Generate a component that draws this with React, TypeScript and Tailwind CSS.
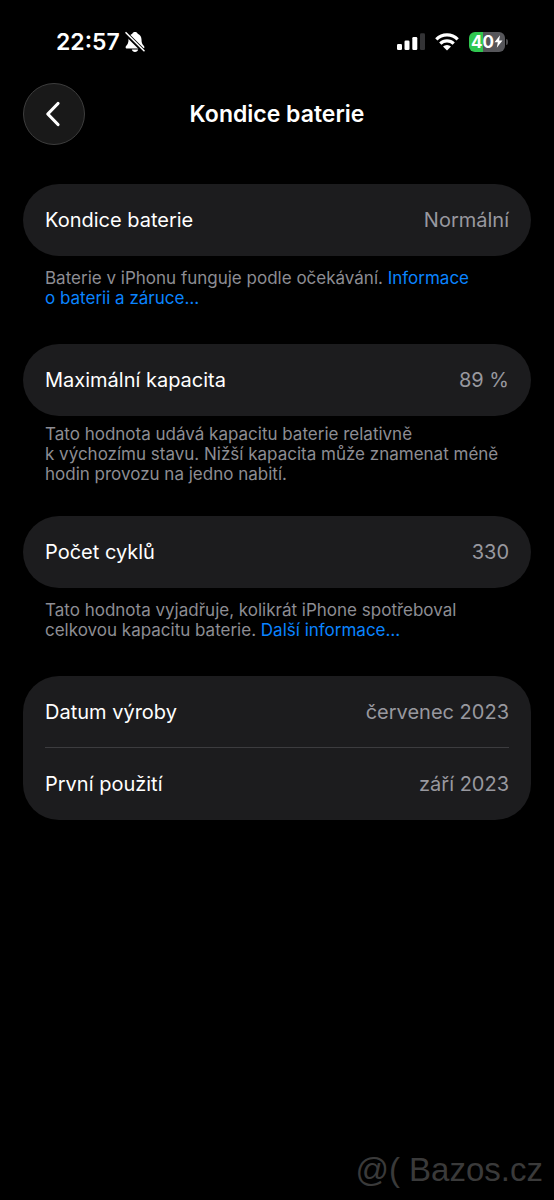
import React from 'react';

interface RowData {
  label: string;
  value: string;
}

interface GroupData {
  rows: RowData[];
  note?: React.ReactNode;
  noteClass?: string;
}

const NoteLink: React.FC<{ children: React.ReactNode }> = ({ children }) => (
  <a href="#info" className="text-[#0a84ff]">{children}</a>
);

const GROUPS: GroupData[] = [
  {
    rows: [{ label: 'Kondice baterie', value: 'Normální' }],
    note: (
      <>
        Baterie v iPhonu funguje podle očekávání.{' '}
        <NoteLink>Informace o&nbsp;baterii a&nbsp;záruce…</NoteLink>
      </>
    ),
    noteClass: 'pt-3 pb-9',
  },
  {
    rows: [{ label: 'Maximální kapacita', value: '89 %' }],
    note: (
      <>
        Tato hodnota udává kapacitu baterie relativně k&nbsp;výchozímu stavu. Nižší kapacita může
        znamenat méně hodin provozu na jedno nabití.
      </>
    ),
    noteClass: 'pt-2 pb-8',
  },
  {
    rows: [{ label: 'Počet cyklů', value: '330' }],
    note: (
      <>
        Tato hodnota vyjadřuje, kolikrát iPhone spotřeboval celkovou kapacitu baterie.{' '}
        <NoteLink>Další informace…</NoteLink>
      </>
    ),
    noteClass: 'pt-3 pb-9',
  },
  {
    rows: [
      { label: 'Datum výroby', value: 'červenec 2023' },
      { label: 'První použití', value: 'září 2023' },
    ],
  },
];

const StatusBar: React.FC = () => (
  <div className="flex h-[83px] items-center justify-between pr-[46px] pl-14">
    <div className="flex items-center gap-1">
      <span className="text-[23px] leading-7 font-semibold">22:57</span>
      {/* Silent mode */}
      <svg width="22" height="22" viewBox="0 0 22 22" aria-hidden="true">
        <path
          d="M11 1c-1.400 0-2.300.7-2.700 1.700C5.800 3.600 4.500 5.800 4.500 8.500c0 3.300-.8 4.700-2 6-.5.6-.9 1-.9 1.700 0 .7.5 1.300 1.300 1.300h16.200c.8 0 1.300-.6 1.300-1.300 0-.7-.4-1.100-.9-1.700-1.200-1.300-2-2.700-2-6 0-2.700-1.300-4.900-3.800-5.800C13.300 1.700 12.400 1 11 1Z"
          fill="#fff"
        />
        <path d="M7.800 18.500h6.400c-.3 1.600-1.600 2.500-3.200 2.500s-2.900-.9-3.200-2.500Z" fill="#fff" />
        <path d="M1.500 2 20 20.500" stroke="#000" strokeWidth="4" />
        <path d="M2 1.700 20 19.700" stroke="#fff" strokeWidth="1.600" strokeLinecap="round" />
      </svg>
    </div>

    <div className="flex items-center gap-[10px]">
      {/* Signal */}
      <svg width="28" height="19" viewBox="0 0 28 19" aria-hidden="true">
        <rect x="0" y="12" width="5" height="6" rx="1.300" fill="#fff" />
        <rect x="7.500" y="8.500" width="5" height="9.500" rx="1.300" fill="#fff" />
        <rect x="15.300" y="5" width="5" height="13" rx="1.300" fill="#fff" />
        <rect x="23" y="1.200" width="5" height="16.800" rx="1.300" fill="#333335" />
      </svg>
      {/* Wi-Fi */}
      <svg width="24" height="18" viewBox="0 0 24 18" aria-hidden="true">
        <g fill="none" stroke="#fff" strokeWidth="3.200">
          <path d="M1.300 6.300a15.200 15.200 0 0 1 21.400 0" />
          <path d="M5.300 10.600a9.500 9.500 0 0 1 13.400 0" />
        </g>
        <path d="M12 17.600 8 13.600a5.700 5.700 0 0 1 8 0Z" fill="#fff" />
      </svg>
      {/* Battery */}
      <div className="flex items-center gap-px">
        <div className="flex h-5 w-9 items-center justify-center rounded-md bg-linear-to-r from-[#30c750] from-40% to-[#56565a] to-40%">
          <span className="text-[17px] leading-5 font-bold">40</span>
          <svg width="9" height="13" viewBox="0 0 9 13" aria-hidden="true">
            <path d="M6 .3.500 7.200h3.300L2.800 12.700 8.500 5.600H5.100Z" fill="#fff" />
          </svg>
        </div>
        <div className="h-1.5 w-0.5 rounded-r-full bg-[#4a4a4c]" />
      </div>
    </div>
  </div>
);

const Group: React.FC<{ group: GroupData }> = ({ group }) => (
  <section>
    <dl className="rounded-[36px] bg-[#1c1c1e] px-[22px]">
      {group.rows.map((row) => (
        <div
          key={row.label}
          className="flex min-h-[72px] items-center justify-between gap-4 border-b border-[#3c3c3f] last:border-b-0"
        >
          <dt className="text-[20px] leading-7">{row.label}</dt>
          <dd className="text-[20px] leading-7 text-[#98989f]">{row.value}</dd>
        </div>
      ))}
    </dl>
    {group.note && (
      <p className={`px-[22px] text-[17px] leading-5 text-[#8d8d93] ${group.noteClass}`}>{group.note}</p>
    )}
  </section>
);

const App: React.FC = () => {
  return (
    <div className="relative min-h-screen bg-black font-['Inter','Liberation_Sans',sans-serif] text-white">
      <StatusBar />

      <header className="grid grid-cols-[62px_1fr_62px] items-center px-[23px]">
        <button
          type="button"
          aria-label="Zpět"
          className="flex size-[62px] items-center justify-center rounded-full border border-[#3d3d3d] bg-[#191919]"
        >
          <svg width="18" height="26" viewBox="0 0 18 26" fill="none" aria-hidden="true">
            <path
              d="M13 2.500 2.800 13 13 23.500"
              stroke="#fff"
              strokeWidth="3.200"
              strokeLinecap="round"
              strokeLinejoin="round"
            />
          </svg>
        </button>
        <h1 className="text-center text-[23px] leading-7 font-semibold">Kondice baterie</h1>
      </header>

      <main className="px-[23px] pt-[39px]">
        {GROUPS.map((group) => (
          <Group key={group.rows[0].label} group={group} />
        ))}
      </main>

      {/* Watermark */}
      <div className="absolute right-[11px] bottom-3 font-['Liberation_Sans',Arial,sans-serif] text-[33px] leading-9 text-[#3a3a3a]">
        @( Bazos.cz
      </div>
    </div>
  );
};

export default App;
